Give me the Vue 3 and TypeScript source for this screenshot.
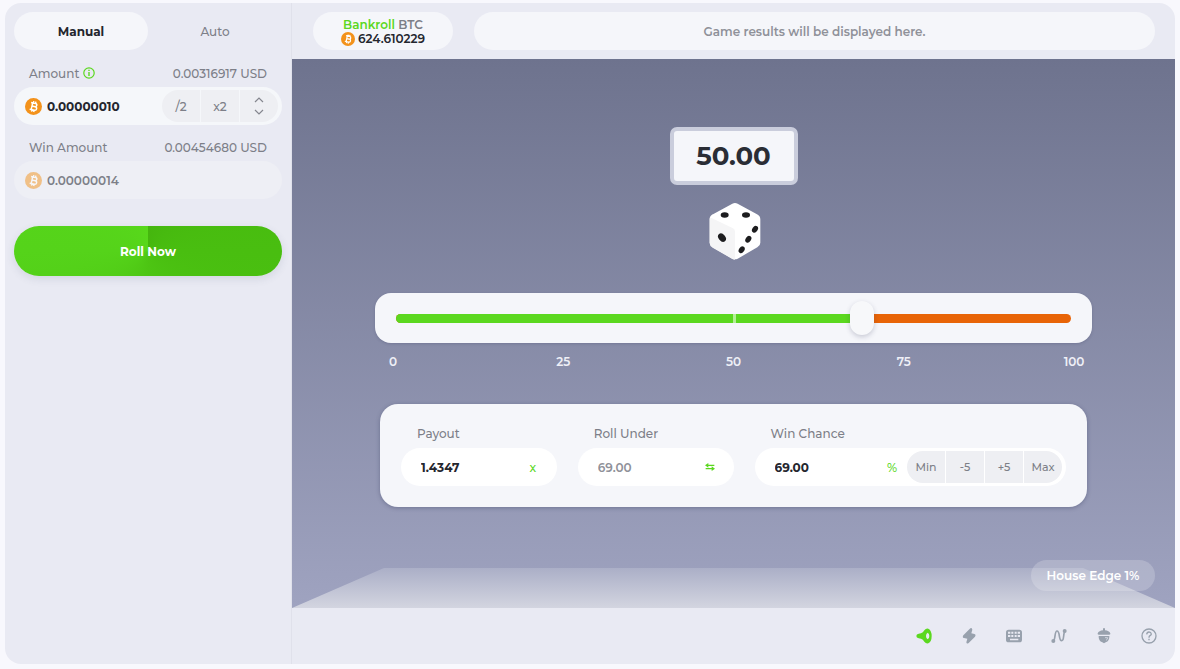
<script setup lang="ts">
import { ref } from 'vue'

const amount = ref('0.00000010')
const winAmount = ref('0.00000014')
const payout = ref('1.4347')
const rollUnder = ref('69.00')
const winChance = ref('69.00')
const target = ref(69)
const scale = [0, 25, 50, 75, 100]
const steps = ['Min', '-5', '+5', 'Max']
</script>

<template>
  <div class="page">
    <div class="game">
      <aside class="sidebar">
        <div class="tabs">
          <button type="button" class="tab active">Manual</button>
          <button type="button" class="tab">Auto</button>
        </div>

        <div class="label-row">
          <label for="amount">Amount</label>
          <svg class="info" viewBox="0 0 12 12" aria-hidden="true">
            <circle cx="6" cy="6" r="5.2" fill="none" stroke="#5bd81f" stroke-width="1.2" />
            <path d="M6 5v4M6 2.8v1.3" stroke="#5bd81f" stroke-width="1.4" />
          </svg>
          <span class="usd">0.00316917 USD</span>
        </div>
        <div class="amount-box">
          <svg class="coin" viewBox="0 0 32 32" aria-hidden="true">
            <circle cx="16" cy="16" r="16" fill="#f3921b" />
            <g transform="rotate(12 16 16)" fill="none" stroke="#fff" stroke-width="2.8">
              <path d="M10 9.500h8.500a3.100 3.100 0 0 1 0 6.200h-5.500M13 15.700h6.200a3.300 3.300 0 0 1 0 6.800H10M13 9.500v13M14.500 6v3.500M18.500 6v3.500M14.500 22.500V26M18.500 22.500V26" />
            </g>
          </svg>
          <input id="amount" v-model="amount" type="text" />
          <div class="group">
            <button type="button">/2</button>
            <button type="button">x2</button>
            <button type="button" aria-label="Adjust amount">
              <svg class="arrows" viewBox="0 0 12 20" aria-hidden="true">
                <path d="M2 6l4-4 4 4M2 14l4 4 4-4" fill="none" stroke="#85878f" stroke-width="1.200" />
              </svg>
            </button>
          </div>
        </div>

        <div class="label-row second">
          <label for="win-amount">Win Amount</label>
          <span class="usd">0.00454680 USD</span>
        </div>
        <div class="amount-box muted">
          <svg class="coin" viewBox="0 0 32 32" aria-hidden="true">
            <circle cx="16" cy="16" r="16" fill="#f3921b" />
            <g transform="rotate(12 16 16)" fill="none" stroke="#fff" stroke-width="2.8">
              <path d="M10 9.500h8.500a3.100 3.100 0 0 1 0 6.200h-5.500M13 15.700h6.200a3.300 3.300 0 0 1 0 6.800H10M13 9.500v13M14.500 6v3.500M18.500 6v3.500M14.500 22.500V26M18.500 22.500V26" />
            </g>
          </svg>
          <input id="win-amount" v-model="winAmount" type="text" readonly />
        </div>

        <button type="button" class="roll">Roll Now</button>
      </aside>

      <main class="main">
        <header class="topbar">
          <div class="bankroll">
            <div class="bank-name"><b>Bankroll</b> BTC</div>
            <div class="bank-value">
              <svg class="coin small" viewBox="0 0 32 32" aria-hidden="true">
                <circle cx="16" cy="16" r="16" fill="#f3921b" />
                <g transform="rotate(12 16 16)" fill="none" stroke="#fff" stroke-width="2.8">
                  <path d="M10 9.500h8.500a3.100 3.100 0 0 1 0 6.200h-5.500M13 15.700h6.200a3.300 3.300 0 0 1 0 6.800H10M13 9.500v13M14.500 6v3.500M18.500 6v3.500M14.500 22.500V26M18.500 22.500V26" />
                </g>
              </svg>
              624.610229
            </div>
          </div>
          <div class="results">Game results will be displayed here.</div>
        </header>

        <section class="stage">
          <div class="floor"></div>
          <output class="display">50.00</output>
          <svg class="dice" viewBox="-6 0 162 174" aria-hidden="true">
            <path d="M12 37L70 5q8-4 16 0l58 32q10 5 10 15v70q0 9-9 14l-59 34q-8 4-16 0l-59-34q-9-5-9-14V52q0-10 9-15z" fill="#fff" />
            <path d="M3 46l69 33q6 3 6 10v84q-4 0-8-2l-59-34q-9-5-9-14V52q0-3 1-6z" fill="#f5f5f6" />
            <g fill="#1d1d1f">
              <ellipse cx="47" cy="39" rx="12" ry="8" />
              <ellipse cx="111" cy="39" rx="12" ry="8" />
              <ellipse cx="39" cy="107" rx="10" ry="14" transform="rotate(-40 39 107)" />
              <ellipse cx="138" cy="82" rx="8" ry="11" transform="rotate(35 138 82)" />
              <ellipse cx="118" cy="112" rx="8" ry="11" transform="rotate(35 118 112)" />
              <ellipse cx="98" cy="143" rx="8" ry="11" transform="rotate(35 98 143)" />
            </g>
          </svg>

          <div class="slider-block">
            <div class="slider">
              <div class="track">
                <div class="fill" :style="{ width: target + '%' }"></div>
                <div class="mark"></div>
              </div>
              <input v-model.number="target" class="range" type="range" min="0" max="100" aria-label="Roll target" />
            </div>
            <div class="scale">
              <span v-for="n in scale" :key="n">{{ n }}</span>
            </div>
          </div>

          <div class="bet-card">
            <div class="field">
              <label for="payout">Payout</label>
              <div class="box">
                <input id="payout" v-model="payout" type="text" />
                <span class="unit">x</span>
              </div>
            </div>
            <div class="field">
              <label for="roll-under">Roll Under</label>
              <div class="box">
                <input id="roll-under" v-model="rollUnder" class="soft" type="text" readonly />
                <button type="button" class="unit swap" aria-label="Switch direction">
                  <svg viewBox="0 0 30 24" aria-hidden="true">
                    <path d="M7 7h21M2 17h21" fill="none" stroke="#5bd81f" stroke-width="4" />
                    <path d="M10 0v14L0 7zM20 10v14l10-7z" fill="#5bd81f" />
                  </svg>
                </button>
              </div>
            </div>
            <div class="field">
              <label for="win-chance">Win Chance</label>
              <div class="box wide">
                <input id="win-chance" v-model="winChance" type="text" />
                <span class="percent">%</span>
                <div class="group compact">
                  <button v-for="s in steps" :key="s" type="button">{{ s }}</button>
                </div>
              </div>
            </div>
          </div>

          <div class="edge">House Edge 1%</div>
        </section>

        <footer class="tools">
          <button type="button" aria-label="Sound">
            <svg viewBox="0 0 48 48" aria-hidden="true">
              <path fill="#5bd81f" fill-rule="evenodd" d="M8 17Q1 18 1 24T8 31L15 32Q21 34 25 41Q30 48 37 46Q47 41 47 24Q47 7 37 2Q30 0 25 7Q21 14 15 16ZM35 14Q30 16 30 24T35 34Q40 32 40 24T35 14Z" />
            </svg>
          </button>
          <button type="button" aria-label="Turbo">
            <svg viewBox="0 0 48 48" aria-hidden="true">
              <path fill="#98a1ad" d="M28 1L7 22Q3 29 9 30L19 32L16 43Q17 49 23 45L42 26Q46 19 40 18L31 16L34 5Q33-2 28 1Z" />
            </svg>
          </button>
          <button type="button" aria-label="Hotkeys">
            <svg viewBox="0 0 48 48" aria-hidden="true">
              <rect x="0" y="5" width="48" height="38" rx="8" fill="#98a1ad" />
              <path fill="#e9eaf3" d="M6 11h7v6H6zM16 11h6v6h-6zM26 11h6v6h-6zM35 11h7v6h-7zM6 21h7v6H6zM16 21h6v6h-6zM26 21h6v6h-6zM35 21h7v6h-7zM12 32h25v5H12z" />
            </svg>
          </button>
          <button type="button" aria-label="Live stats">
            <svg viewBox="0 0 48 48" aria-hidden="true">
              <path d="M7 38C14 36 10 9 18 9C28 9 22 38 32 38C40 38 36 20 41 10" fill="none" stroke="#98a1ad" stroke-width="5" />
              <circle cx="7" cy="39" r="6" fill="#98a1ad" />
              <circle cx="41" cy="9" r="6" fill="#98a1ad" />
            </svg>
          </button>
          <button type="button" aria-label="Seeds">
            <svg viewBox="0 0 48 48" aria-hidden="true">
              <path fill="#98a1ad" d="M21 1h6v6Q39 8 43 16Q44 20 40 20H8Q4 20 5 16Q9 8 21 7ZM8 24H40Q41 39 29 43L24 46L19 43Q7 39 8 24Z" />
              <path d="M27 29h8q-1 6-5 8" fill="none" stroke="#e9eaf3" stroke-width="2" />
            </svg>
          </button>
          <button type="button" aria-label="Help">
            <svg viewBox="0 0 48 48" aria-hidden="true">
              <g fill="none" stroke="#98a1ad" stroke-width="4">
                <circle cx="24" cy="24" r="21" />
                <path d="M17 19Q18 12 24 12T31 18Q31 21 27 23Q24 25 24 29M24 32v5" />
              </g>
            </svg>
          </button>
        </footer>
      </main>
    </div>
  </div>
</template>

<style>
body {
  margin: 0;
  background: #f8f8fd;
}
</style>

<style scoped>
* {
  box-sizing: border-box;
}

.page {
  display: flex;
  min-height: 100vh;
  padding: 3px 5px 5px;
  font-family: Montserrat, Inter, sans-serif;
  font-size: 12px;
  font-weight: 500;
  color: #7d7f88;
}

button,
input {
  margin: 0;
  padding: 0;
  border: 0;
  background: none;
  font: inherit;
  color: inherit;
}

button {
  cursor: pointer;
}

input {
  min-width: 0;
  outline: none;
}

.game {
  display: flex;
  flex: 1;
  border-radius: 16px;
  background: #e9eaf3;
  overflow: hidden;
}

.sidebar {
  flex: none;
  width: 287px;
  padding: 9px;
  border-right: 1px solid #e0e1eb;
}

.tabs {
  display: flex;
  margin-bottom: 9px;
}

.tab {
  flex: 1;
  height: 38px;
  border-radius: 19px;
}

.tab.active {
  background: #f5f6fa;
  font-weight: 700;
  color: #24262e;
}

.label-row {
  display: flex;
  align-items: center;
  height: 28px;
  padding: 0 15px;
}

.label-row.second {
  margin-top: 8px;
}

.info {
  width: 12px;
  height: 12px;
  margin-left: 4px;
}

.usd {
  margin-left: auto;
}

.amount-box {
  display: flex;
  align-items: center;
  height: 38px;
  padding: 0 4px 0 11px;
  border-radius: 19px;
  background: #f5f7fa;
}

.amount-box input {
  flex: 1;
  font-weight: 700;
  color: #24262e;
}

.amount-box.muted {
  background: #eeeff5;
}

.amount-box.muted input {
  font-weight: 600;
  color: #7d7f88;
}

.muted .coin {
  opacity: 0.5;
}

.coin {
  flex: none;
  width: 17px;
  height: 17px;
  margin-right: 5px;
}

.coin.small {
  width: 14px;
  height: 14px;
  margin-right: 3px;
}

.group {
  display: flex;
  gap: 1px;
  flex: none;
  border-radius: 16px;
  overflow: hidden;
}

.group button {
  display: flex;
  align-items: center;
  justify-content: center;
  width: 38px;
  height: 32px;
  background: #eeeff3;
}

.group.compact button {
  font-size: 11px;
}

.arrows {
  width: 12px;
  height: 20px;
}

.roll {
  width: 100%;
  height: 50px;
  margin-top: 27px;
  border-radius: 25px;
  background: conic-gradient(#45b60e, #49be10 90deg, #4dc513 180deg, #55d31a 270deg, #58d81b);
  box-shadow: 0 3px 8px rgba(60, 70, 100, 0.12);
  font-weight: 700;
  color: #fff;
}

.main {
  display: flex;
  flex: 1;
  flex-direction: column;
  min-width: 0;
}

.topbar {
  display: flex;
  gap: 21px;
  height: 56px;
  padding: 9px 20px 9px 21px;
}

.bankroll {
  display: flex;
  flex: none;
  flex-direction: column;
  align-items: center;
  justify-content: center;
  width: 140px;
  padding-top: 2px;
  border-radius: 19px;
  background: #f5f6fa;
  font-weight: 600;
  line-height: 14px;
}

.bank-name b {
  font-weight: 600;
  color: #5bd81f;
}

.bank-value {
  display: flex;
  align-items: center;
  color: #24262e;
}

.results {
  display: flex;
  flex: 1;
  align-items: center;
  justify-content: center;
  border-radius: 19px;
  background: #f5f6fa;
  font-weight: 600;
  color: #8f9199;
}

.stage {
  position: relative;
  display: flex;
  flex: 1;
  flex-direction: column;
  align-items: center;
  padding: 68px 20px 101px;
  background: linear-gradient(#6e738e, #9fa3c0);
}

.floor {
  position: absolute;
  right: 0;
  bottom: 0;
  left: 0;
  height: 40px;
  background: linear-gradient(#abafc7, #d3d5e0);
  clip-path: polygon(92px 0, calc(100% - 92px) 0, 100% 100%, 0 100%);
}

.display {
  width: 128px;
  height: 58px;
  border: 4px solid #cacddc;
  border-radius: 7px;
  background: #f5f6fa;
  font-size: 26px;
  font-weight: 700;
  line-height: 50px;
  text-align: center;
  color: #2a2d35;
}

.dice {
  width: 54px;
  height: 58px;
  margin: 17px 0 33px;
}

.slider-block {
  width: 100%;
  max-width: 717px;
}

.slider {
  display: grid;
  align-items: center;
  height: 50px;
  padding: 0 21px;
  border-radius: 16px;
  background: #f5f6fa;
  box-shadow: 0 1px 3px rgba(40, 45, 80, 0.2);
}

.track,
.range {
  grid-area: 1 / 1;
}

.track {
  position: relative;
  height: 9px;
  border-radius: 5px;
  background: #e86407;
  overflow: hidden;
}

.fill {
  height: 100%;
  background: #5bd81f;
}

.mark {
  position: absolute;
  top: 0;
  left: 50%;
  width: 3px;
  height: 100%;
  margin-left: -1px;
  background: #b3ef96;
}

.range {
  z-index: 1;
  width: calc(100% + 24px);
  height: 34px;
  margin: 0 -12px;
  appearance: none;
}

.range::-webkit-slider-thumb {
  width: 24px;
  height: 34px;
  border-radius: 12px;
  background: #f7f8fa;
  box-shadow: 0 2px 5px rgba(40, 45, 80, 0.22);
  appearance: none;
}

.scale {
  display: flex;
  justify-content: space-between;
  margin: 9px -3px 32px;
  font-weight: 600;
  line-height: 20px;
  color: #eff0f7;
}

.scale span {
  width: 42px;
  text-align: center;
}

.bet-card {
  display: grid;
  grid-template-columns: 1fr 1fr 2fr;
  gap: 21px;
  width: 100%;
  max-width: 707px;
  padding: 16px 21px 21px;
  border-radius: 18px;
  background: #f5f6fa;
  box-shadow: 0 1px 4px rgba(40, 45, 80, 0.35);
}

.field {
  min-width: 0;
}

.field label {
  display: block;
  height: 28px;
  padding-left: 16px;
  line-height: 27px;
}

.box {
  display: flex;
  align-items: center;
  height: 38px;
  padding: 0 15px 0 20px;
  border-radius: 19px;
  background: #fff;
}

.box.wide {
  padding-right: 4px;
}

.box input {
  flex: 1;
  font-weight: 700;
  color: #24262e;
}

.box input.soft {
  font-weight: 600;
  color: #8f9199;
}

.unit {
  width: 18px;
  text-align: center;
  color: #5bd81f;
}

.swap svg {
  display: block;
  width: 10px;
  height: 8px;
  margin: 0 auto;
}

.percent {
  margin-right: 10px;
  color: #5bd81f;
}

.edge {
  position: absolute;
  right: 20px;
  bottom: 17px;
  width: 124px;
  border-radius: 16px;
  background: rgba(255, 255, 255, 0.2);
  font-weight: 600;
  line-height: 31px;
  text-align: center;
  color: #fff;
}

.tools {
  display: flex;
  justify-content: flex-end;
  height: 56px;
  padding-right: 4px;
}

.tools button {
  display: flex;
  align-items: center;
  justify-content: center;
  width: 45px;
}

.tools svg {
  width: 16px;
  height: 16px;
}
</style>
